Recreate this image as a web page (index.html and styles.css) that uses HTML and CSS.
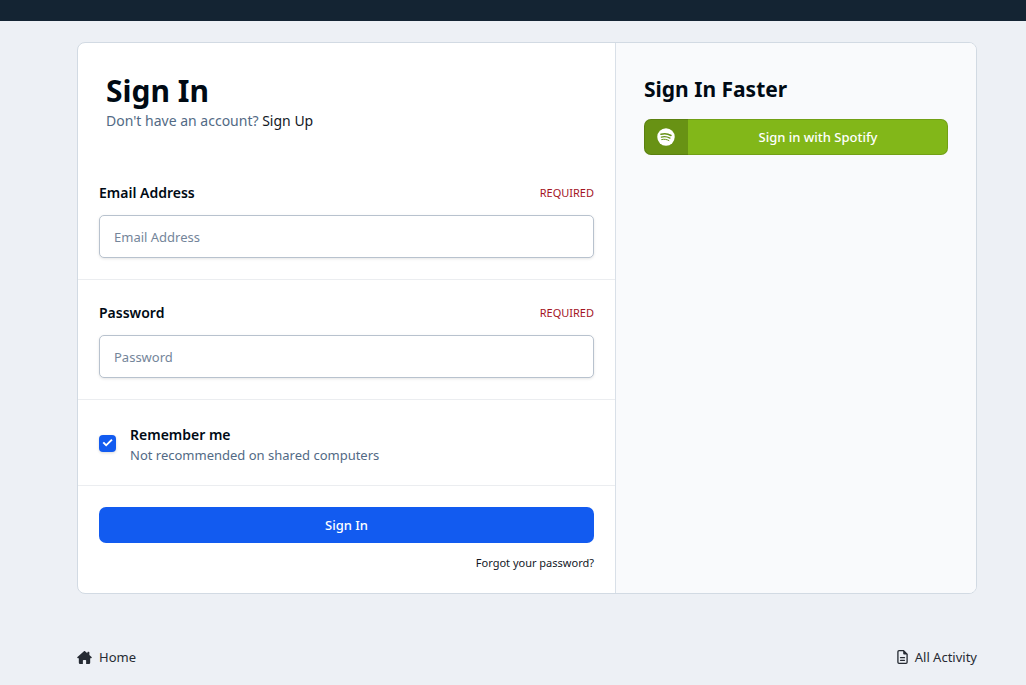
FILE: index.html
```html
<!DOCTYPE html>
<html lang="en">
<head>
  <meta charset="UTF-8" />
  <meta name="viewport" content="width=device-width, initial-scale=1" />
  <title>Sign In</title>
  <link rel="stylesheet" href="styles.css">
</head>
<body>
  <header class="top-bar"></header>

  <div class="page">
    <main class="card">
      <!-- LOGIN FORM -->
      <form class="login">
        <div class="login-header">
          <h1>Sign In</h1>
          <p>Don't have an account? <a href="#">Sign Up</a></p>
        </div>

        <div class="row">
          <div class="row-label">
            <label for="email">Email Address</label>
            <span class="required">REQUIRED</span>
          </div>
          <input class="text-input" type="email" id="email" placeholder="Email Address" />
        </div>

        <div class="row">
          <div class="row-label">
            <label for="password">Password</label>
            <span class="required">REQUIRED</span>
          </div>
          <input class="text-input" type="password" id="password" placeholder="Password" />
        </div>

        <div class="row remember">
          <input class="checkbox" type="checkbox" id="remember" checked />
          <div class="remember-text">
            <label for="remember">Remember me</label>
            <p class="hint">Not recommended on shared computers</p>
          </div>
        </div>

        <div class="row submit">
          <button class="btn btn-primary" type="submit">Sign In</button>
          <a class="forgot" href="#">Forgot your password?</a>
        </div>
      </form>

      <!-- SOCIAL LOGIN -->
      <aside class="social">
        <h2>Sign In Faster</h2>
        <button class="btn btn-spotify" type="button">
          <span class="btn-icon">
            <svg viewBox="0 0 496 512" width="18" height="18" aria-hidden="true">
              <circle cx="248" cy="256" r="248" fill="#fff" />
              <g fill="none" stroke="#679217" stroke-linecap="round">
                <path d="M106 180c95-26 200-15 284 32" stroke-width="44" />
                <path d="M116 258c84-22 172-10 244 31" stroke-width="36" />
                <path d="M126 328c70-16 142-8 204 28" stroke-width="28" />
              </g>
            </svg>
          </span>
          <span class="btn-text">Sign in with Spotify</span>
        </button>
      </aside>
    </main>

    <nav class="footer-nav">
      <a href="#">
        <svg viewBox="0 0 576 512" width="15" height="13" aria-hidden="true">
          <path fill="currentColor" d="M576 256c0 18-15 32-32 32h-32l1 160c0 36-29 64-64 64H352V376c0-13-11-24-24-24h-80c-13 0-24 11-24 24v136h-96c-35 0-64-28-64-64V288H32c-18 0-32-14-32-32 0-9 3-17 10-24L266 8c7-6 14-8 21-8s15 3 22 8l91 80V56c0-13 11-24 24-24h32c13 0 24 11 24 24v103l84 73c8 7 12 15 12 24z" />
        </svg>
        Home
      </a>
      <a href="#">
        <svg viewBox="0 0 384 512" width="11" height="14" aria-hidden="true">
          <path fill="none" stroke="currentColor" stroke-width="48" stroke-linejoin="round" d="M64 24h168l128 128v296q0 40-40 40H64q-40 0-40-40V64q0-40 40-40z" />
          <path fill="currentColor" d="M216 24h24l120 120v24H256q-40 0-40-40z" />
          <path fill="none" stroke="currentColor" stroke-width="48" stroke-linecap="round" d="M120 280h144M120 376h144" />
        </svg>
        All Activity
      </a>
    </nav>
  </div>
</body>
</html>
```
FILE: styles.css
```css
* {
  box-sizing: border-box;
}

body {
  margin: 0;
  min-height: 100vh;
  background-color: #edf0f5;
  color: #000a14;
  font-family: "Noto Sans", "Open Sans", sans-serif;
  font-size: 14px;
  line-height: 20px;
}

h1, h2, p {
  margin: 0;
}

a {
  color: #12181f;
  text-decoration: none;
}

.top-bar {
  height: 21px;
  background-color: #142433;
}

.page {
  padding: 21px 49px 16px 77px;
}

.card {
  display: flex;
  background-color: #fff;
  border: 1px solid #d2dae3;
  border-radius: 8px;
  overflow: hidden;
}

/* Login form */
.login {
  flex: 1;
  min-width: 0;
}

.login-header {
  padding: 28px 28px 29px;
  color: #526a85;
}

.login-header h1 {
  color: #000a14;
  font-size: 30px;
  line-height: 40px;
  font-weight: 700;
}

.row {
  padding: 21px;
  border-bottom: 1px solid #ebedf0;
}

.row:last-child {
  border-bottom: none;
}

.row-label {
  display: flex;
  justify-content: space-between;
  align-items: center;
  height: 24px;
  margin-bottom: 10px;
}

label {
  font-weight: 600;
}

.required {
  color: #a3141f;
  font-size: 11px;
}

.text-input {
  display: block;
  width: 100%;
  height: 43px;
  padding: 0 14px;
  font: inherit;
  font-size: 13px;
  background-color: #fff;
  border: 1px solid #b8c2ce;
  border-radius: 5px;
  box-shadow: 0 1px 3px rgba(0, 0, 0, 0.1);
}

.text-input::placeholder {
  color: #74859a;
  opacity: 1;
}

.remember {
  display: flex;
  align-items: center;
  gap: 14px;
  padding-bottom: 20px;
}

.remember-text {
  padding-top: 4px;
}

.checkbox {
  appearance: none;
  flex-shrink: 0;
  display: grid;
  place-items: center;
  width: 17px;
  height: 17px;
  margin: 0;
  background-color: #125bf0;
  border-radius: 4px;
  box-shadow: 0 1px 3px rgba(0, 0, 0, 0.15);
}

.checkbox:checked::before {
  content: "";
  width: 11px;
  height: 9px;
  background-color: #fff;
  clip-path: polygon(5% 50%, 18% 36%, 38% 60%, 84% 6%, 97% 20%, 38% 88%);
}

.hint {
  color: #526a85;
  font-size: 13px;
}

.submit {
  display: flex;
  flex-direction: column;
  gap: 10px;
  padding-bottom: 20px;
}

.btn {
  display: flex;
  align-items: center;
  justify-content: center;
  width: 100%;
  height: 36px;
  padding: 0;
  border: none;
  border-radius: 7px;
  color: #fff;
  font: inherit;
  font-size: 13px;
  font-weight: 500;
  cursor: pointer;
}

.btn-primary {
  background-color: #125bf0;
}

.forgot {
  align-self: flex-end;
  font-size: 11px;
}

/* Social login */
.social {
  width: 361px;
  padding: 28px;
  background-color: #f9fafc;
  border-left: 1px solid #d9e0e8;
}

.social h2 {
  margin-bottom: 12px;
  font-size: 21px;
  line-height: 36px;
  font-weight: 700;
}

.btn-spotify {
  align-items: stretch;
  background-color: #82b719;
  overflow: hidden;
  box-shadow: inset 0 0 0 1px rgba(0, 0, 0, 0.12);
}

.btn-icon {
  display: flex;
  align-items: center;
  justify-content: center;
  width: 44px;
  background-color: rgba(0, 0, 0, 0.2);
}

.btn-text {
  flex: 1;
  align-self: center;
}

/* Footer */
.footer-nav {
  display: flex;
  justify-content: space-between;
  margin-top: 53px;
  font-size: 13px;
}

.footer-nav a {
  display: flex;
  align-items: center;
  gap: 7px;
  color: #262b33;
}
```
